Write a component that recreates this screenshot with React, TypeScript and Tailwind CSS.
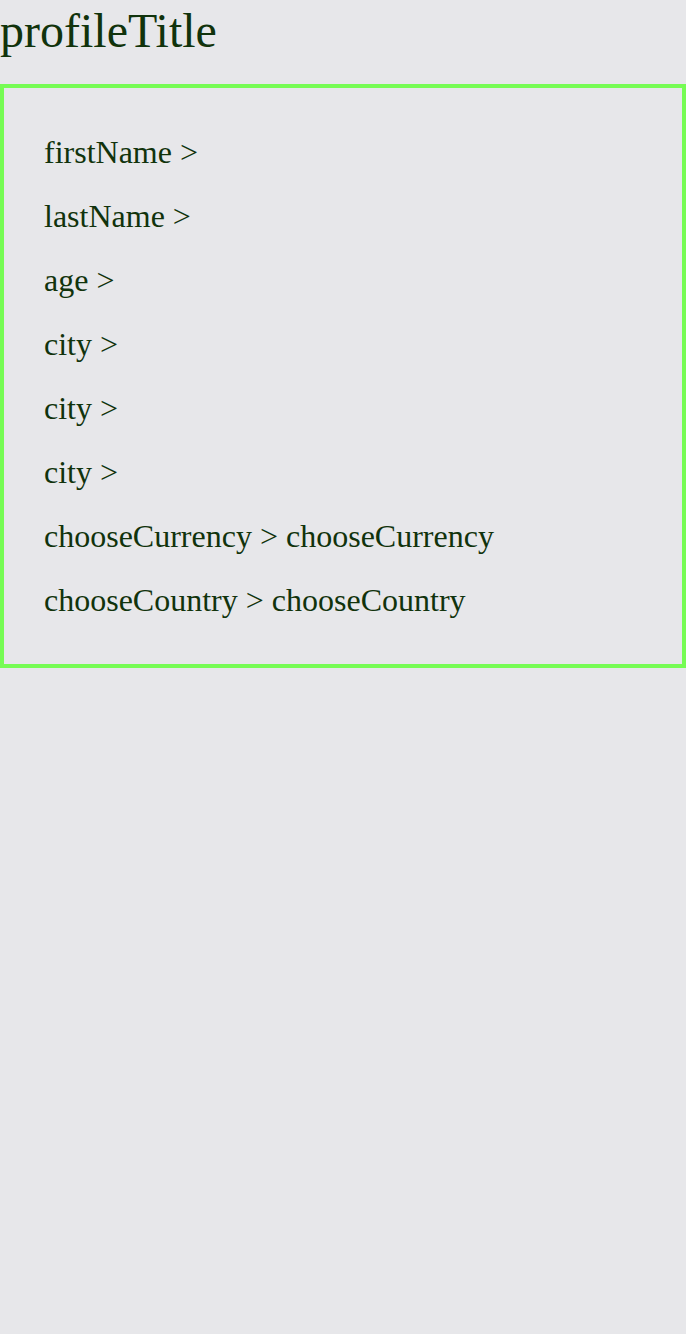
import React from "react";

const rows = [
  "firstName >",
  "lastName >",
  "age >",
  "city >",
  "city >",
  "city >",
  "chooseCurrency > chooseCurrency",
  "chooseCountry > chooseCountry",
];

export default function App() {
  return (
    <div
      className="min-h-[1334px] w-full bg-[#e7e7ea] text-[#11330c]"
      style={{ fontFamily: '"Liberation Serif", "Times New Roman", serif' }}
    >
      {/* Title */}
      <div className="h-[84px] text-[48px] leading-[61px]">profileTitle</div>

      {/* Profile fields */}
      <div className="border-4 border-[#76fc54] pt-8 pb-8 pl-10">
        {rows.map((row, i) => (
          <div key={i} className="h-16 text-[32px] leading-[64px] whitespace-nowrap">
            {row}
          </div>
        ))}
      </div>
    </div>
  );
}
